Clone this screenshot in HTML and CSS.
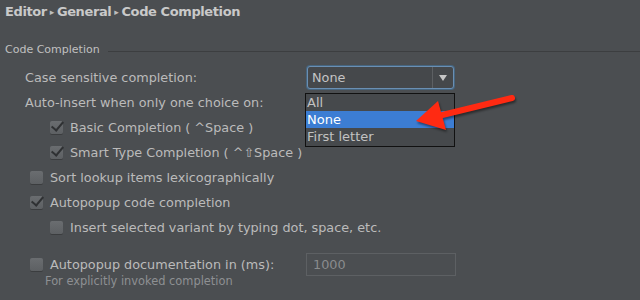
FILE: index.html
```html
<!DOCTYPE html>
<html lang="en">
<head>
    <meta charset="UTF-8">
    <title>Code Completion</title>
    <link rel="stylesheet" href="styles.css">
</head>
<body>

<div class="page">
    <header class="crumbs">
        <span>Editor</span><span class="sep">&#9656;</span><span>General</span><span class="sep">&#9656;</span><span>Code Completion</span>
    </header>

    <section class="group">
        <div class="group-title"><span>Code Completion</span><i class="rule"></i></div>

        <div class="row field-row indent-1">
            <label class="field-label">Case sensitive completion:</label>
            <div class="combo">
                <span class="combo-value">None</span>
                <span class="combo-btn"><span class="tri"></span></span>
            </div>
        </div>

        <div class="row indent-1">Auto-insert when only one choice on:</div>

        <div class="row indent-3">
            <span class="check on"></span><span>Basic Completion ( ^Space )</span>
        </div>
        <div class="row indent-3">
            <span class="check on"></span><span>Smart Type Completion ( ^&#8679;Space )</span>
        </div>
        <div class="row indent-2">
            <span class="check"></span><span>Sort lookup items lexicographically</span>
        </div>
        <div class="row indent-2">
            <span class="check on"></span><span>Autopopup code completion</span>
        </div>
        <div class="row indent-3">
            <span class="check"></span><span>Insert selected variant by typing dot, space, etc.</span>
        </div>

        <div class="row field-row doc-row indent-2">
            <label class="field-label doc-label"><span class="check"></span><span>Autopopup documentation in (ms):</span></label>
            <div class="textfield">1000</div>
        </div>
        <div class="hint">For explicitly invoked completion</div>
    </section>

    <ul class="popup">
        <li>All</li>
        <li class="selected">None</li>
        <li>First letter</li>
    </ul>

    <svg class="arrow" width="120" height="50" viewBox="0 0 120 50">
        <line x1="100" y1="12" x2="22" y2="31" stroke="#ff2a12" stroke-width="6" stroke-linecap="round"/>
        <polygon points="4,35 26,15 34,44" fill="#ff2a12"/>
    </svg>
</div>

</body>
</html>
```

FILE: styles.css
```css
body {
    margin: 0;
    background-color: #4b4e51;
    font-family: "DejaVu Sans", Arial, sans-serif;
    color: #bbbbbb;
    font-size: 12.8px;
}

.page {
    position: relative;
    width: 640px;
    height: 300px;
    overflow: hidden;
}

.crumbs {
    height: 23px;
    padding-left: 5px;
    display: flex;
    align-items: center;
    font-size: 13px;
    font-weight: bold;
    color: #c9c9c9;
    letter-spacing: -0.4px;
}

.crumbs .sep {
    font-size: 9px;
    margin: 0 3px;
    color: #bdbdbd;
}

.group {
    padding-top: 17px;
}

.group-title {
    display: flex;
    align-items: center;
    height: 18px;
    padding-left: 5px;
    font-size: 11px;
    color: #c0c0c0;
    margin-bottom: 7px;
}

.group-title .rule {
    flex: 1;
    height: 1px;
    margin-left: 8px;
    margin-top: 5px;
    background-color: #3c3e40;
}

.row {
    display: flex;
    align-items: center;
    height: 25px;
    white-space: nowrap;
}

.indent-1 { padding-left: 25px; }
.indent-2 { padding-left: 30px; }
.indent-3 { padding-left: 50px; }

.field-label {
    display: flex;
    align-items: center;
    flex: 0 0 auto;
}

.field-row .field-label {
    width: 282px;
}

.doc-row .field-label {
    width: 276px;
}

.check {
    position: relative;
    width: 13px;
    height: 13px;
    margin-right: 7px;
    border-radius: 2px;
    background: linear-gradient(#6a6d70, #5d6063);
    box-shadow: 0 1px 0 #3b3d3f;
    flex: 0 0 auto;
}

.check.on::after {
    content: "";
    position: absolute;
    left: 4px;
    top: -2px;
    width: 5px;
    height: 10px;
    border: solid #2f3133;
    border-width: 0 2px 2px 0;
    transform: rotate(40deg);
}

.combo {
    display: flex;
    width: 145px;
    height: 21px;
    border: 1px solid #6a8fb3;
    border-radius: 3px;
    box-shadow: 0 0 0 1px #46657f;
    background-color: #45484b;
}

.combo-value {
    flex: 1;
    padding-left: 4px;
    line-height: 21px;
    color: #c4c4c4;
}

.combo-btn {
    width: 20px;
    border-left: 1px solid #5d6063;
    display: flex;
    align-items: center;
    justify-content: center;
}

.tri {
    width: 0;
    height: 0;
    border-left: 4px solid transparent;
    border-right: 4px solid transparent;
    border-top: 6px solid #c6c6c6;
}

.doc-row {
    margin-top: 12px;
}

.textfield {
    width: 142px;
    height: 21px;
    padding-left: 6px;
    line-height: 21px;
    border: 1px solid #5d6063;
    color: #8a8c8e;
}

.hint {
    padding-left: 45px;
    font-size: 11.4px;
    color: #8e9093;
    margin-top: -3px;
}

.popup {
    position: absolute;
    left: 305px;
    top: 93px;
    width: 148px;
    margin: 0;
    padding: 0;
    list-style: none;
    border: 1px solid #111;
    background-color: #46494c;
    color: #c2c2c2;
    font-size: 13px;
}

.popup li {
    height: 17px;
    line-height: 17px;
    padding-left: 1px;
}

.popup li:last-child {
    height: 18px;
}

.popup .selected {
    background-color: #3c7dd3;
    color: #ffffff;
}

.arrow {
    position: absolute;
    left: 412px;
    top: 86px;
    filter: drop-shadow(1px 2px 1px rgba(0, 0, 0, 0.45));
}
```
